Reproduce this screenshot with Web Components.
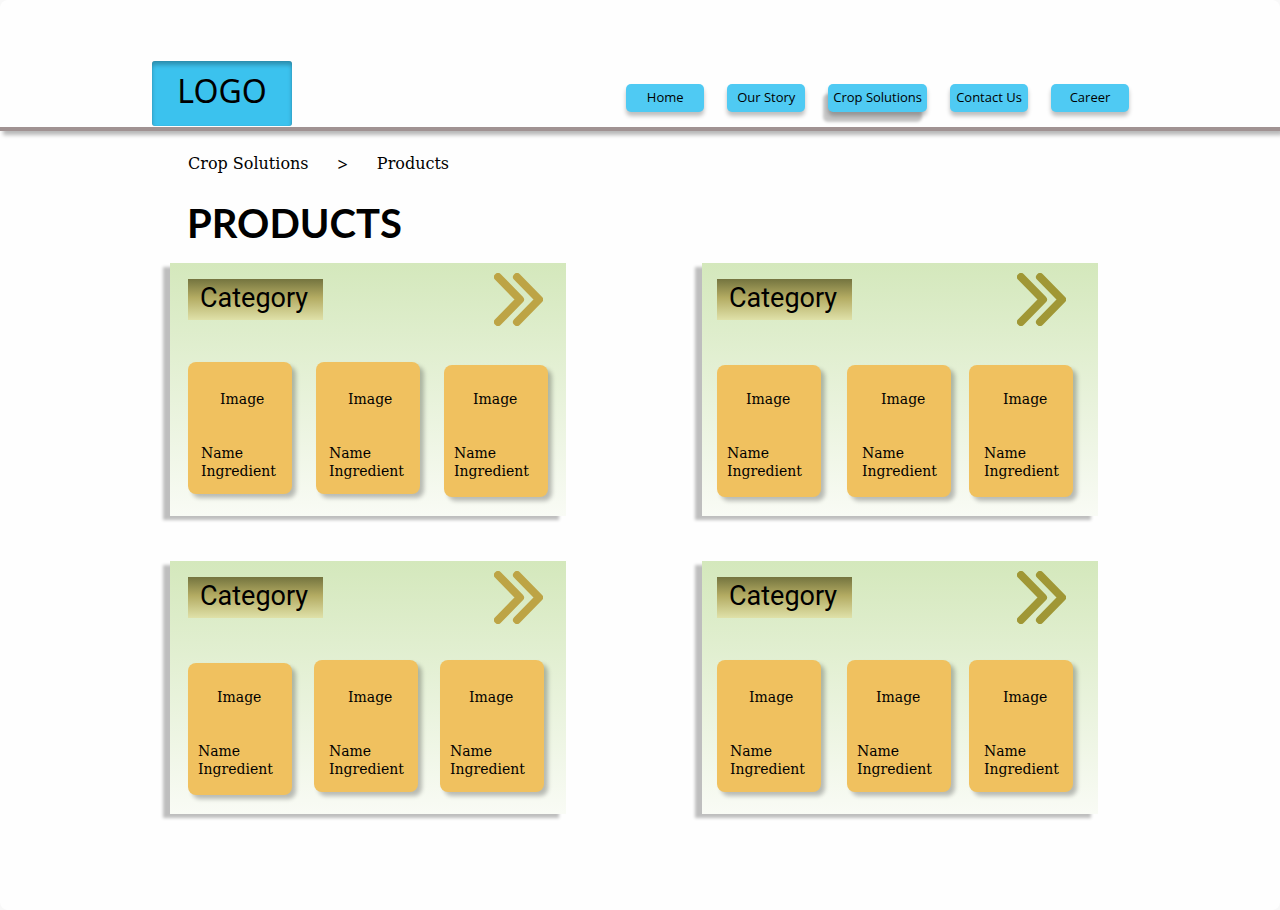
<!DOCTYPE html>
<html lang="en">
<head>
<meta charset="utf-8">
<title>Products</title>
<style>
  html { background: #f8f8f8; }
  body { margin: 0; min-height: 100vh; background: #fefefe; border-radius: 8px; color: #000; font-family: "Noto Sans", sans-serif; }
</style>
</head>
<body>
<products-page></products-page>
<script>
const define = (name, html) => {
  const template = document.createElement('template');
  template.innerHTML = html;
  customElements.define(name, class extends HTMLElement {
    constructor() {
      super();
      this.attachShadow({ mode: 'open' }).append(template.content.cloneNode(true));
    }
  });
};

define('nav-button', `
  <style>
    :host { display: block; --shadow: 0 4px 4px rgba(0,0,0,.25); }
    a { display: block; box-sizing: border-box; min-width: 78px; height: 28px; padding: 0 5px; border-radius: 5px;
        background: #4fcaf3; box-shadow: var(--shadow); color: #000; font: 13px/26px "Open Sans", "Noto Sans", sans-serif;
        text-align: center; text-decoration: none; white-space: nowrap; }
    :host([active]) { --shadow: 0 4px 4px rgba(0,0,0,.25), -5px 10px 3px rgba(0,0,0,.22); }
  </style>
  <a href="#"><slot></slot></a>`);

define('site-header', `
  <style>
    :host { display: block; }
    header { display: flex; justify-content: space-between; align-items: flex-start; padding: 61px 151px 1px 152px;
             border-bottom: 4px solid #a09292; box-shadow: 3px 4px 4px rgba(0,0,0,.28); }
    .logo { width: 140px; height: 65px; border-radius: 3px; background: #3bc2ee; box-shadow: inset 0 4px 4px rgba(0,0,0,.25), inset 0 0 1px rgba(0,0,0,.3);
            color: #000; font-size: 32px; line-height: 60px; text-align: center; text-decoration: none; }
    nav { display: flex; gap: 23px; padding-top: 23px; }
  </style>
  <header>
    <a class="logo" href="#">LOGO</a>
    <nav>
      <nav-button>Home</nav-button>
      <nav-button>Our Story</nav-button>
      <nav-button active>Crop Solutions</nav-button>
      <nav-button>Contact Us</nav-button>
      <nav-button>Career</nav-button>
    </nav>
  </header>`);

define('bread-crumbs', `
  <style>
    :host { display: block; font-family: "DejaVu Serif", serif; font-size: 16px; line-height: 24px; }
    nav { display: flex; gap: 29px; }
    a { color: #000; text-decoration: none; }
    span { font-family: "Noto Sans", sans-serif; font-size: 18px; }
  </style>
  <nav><a href="#">Crop Solutions</a><span>&gt;</span><a href="#">Products</a></nav>`);

define('product-tile', `
  <style>
    :host { display: block; box-sizing: border-box; width: 104px; height: 132px; padding: 28px 0 0 var(--indent, 13px);
            border-radius: 8px; background: #f0c15f; box-shadow: 4px 4px 4px rgba(0,0,0,.25);
            font-family: "DejaVu Serif", serif; font-size: 14px; line-height: 18px; }
    :host([indent="small"]) { --indent: 10px; }
    :host([indent="large"]) { --indent: 15px; }
    :host([low]) { margin-top: 3px; padding-top: 25px; }
    p { margin: 0; }
    .image { padding: 0 0 36px 19px; }
  </style>
  <p class="image">Image</p>
  <p>Name</p>
  <p>Ingredient</p>`);

define('category-panel', `
  <style>
    :host { display: block; --start: 18px; --end: 18px; --arrow-end: 23px; --arrow: #bda445; --tracks: 128fr 128fr 104fr;
            background: linear-gradient(#d4e8bc, #f9fbf5); box-shadow: -7px 4px 3px rgba(0,0,0,.25); }
    :host([tight]) { --end: 22px; --tracks: 126fr 126fr 104fr; }
    :host([aside]) { --start: 15px; --end: 25px; --arrow-end: 32px; --arrow: #a09735; --tracks: 130fr 122fr 104fr; }
    .head { display: flex; justify-content: space-between; align-items: flex-start; padding: 10px var(--arrow-end) 36px var(--start); }
    h2 { box-sizing: border-box; width: 135px; height: 41px; margin: 6px 0 0; padding-left: 12px;
         background: linear-gradient(#74743f, #b3ab62 45%, #dfe1a9); font: 400 27px/38px Roboto, sans-serif; }
    a { display: block; height: 53px; color: var(--arrow); }
    svg { display: block; }
    .tiles { display: grid; grid-template-columns: var(--tracks); align-items: start; padding: 0 var(--end) 0 var(--start); min-height: 154px; }
  </style>
  <div class="head">
    <h2>Category</h2>
    <a href="#" aria-label="Open category">
      <svg width="49" height="53" viewBox="0 0 49 53" fill="none" stroke="currentColor" stroke-width="8" stroke-linecap="round" stroke-linejoin="round"><path d="M4 4L26 26.500L4 49M23 4L45 26.500L23 49"/></svg>
    </a>
  </div>
  <div class="tiles"><slot></slot></div>`);

define('products-page', `
  <style>
    :host { display: block; }
    main { padding: 21px 182px 90px 170px; }
    bread-crumbs { padding-left: 18px; }
    h1 { margin: 23px 0 16px; padding-left: 17px; font: 700 40px/48px Lato, sans-serif; }
    .grid { display: grid; grid-template-columns: 1fr 1fr; gap: 45px 136px; }
  </style>
  <site-header></site-header>
  <main>
    <bread-crumbs></bread-crumbs>
    <h1>PRODUCTS</h1>
    <div class="grid">
      <category-panel>
        <product-tile></product-tile>
        <product-tile></product-tile>
        <product-tile low indent="small"></product-tile>
      </category-panel>
      <category-panel aside>
        <product-tile low indent="small"></product-tile>
        <product-tile low indent="large"></product-tile>
        <product-tile low indent="large"></product-tile>
      </category-panel>
      <category-panel tight>
        <product-tile low indent="small"></product-tile>
        <product-tile indent="large"></product-tile>
        <product-tile indent="small"></product-tile>
      </category-panel>
      <category-panel aside>
        <product-tile></product-tile>
        <product-tile indent="small"></product-tile>
        <product-tile indent="large"></product-tile>
      </category-panel>
    </div>
  </main>`);
</script>
</body>
</html>
